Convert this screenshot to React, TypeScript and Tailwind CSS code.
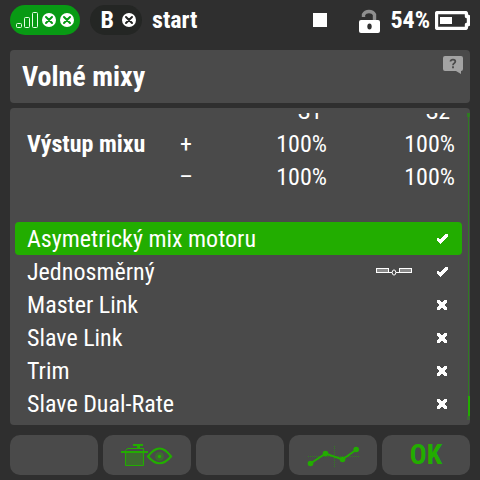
import { useState } from "react";

type MixOption = {
  name: string;
  enabled: boolean;
  surface?: boolean;
};

const mixOptions: MixOption[] = [
  { name: "Asymetrický mix motoru", enabled: true },
  { name: "Jednosměrný", enabled: true, surface: true },
  { name: "Master Link", enabled: false },
  { name: "Slave Link", enabled: false },
  { name: "Trim", enabled: false },
  { name: "Slave Dual-Rate", enabled: false },
];

const SignalIcon = () => (
  <svg width="22" height="16" viewBox="0 0 22 16" fill="none" stroke="#e8ffe8">
    <rect x="0.5" y="11.5" width="5" height="4" rx="1" />
    <rect x="8.5" y="5.5" width="5" height="10" rx="1" />
    <rect x="16.5" y="0.5" width="5" height="15" rx="1" />
  </svg>
);

const CrossCircle = ({ color }: { color: string }) => (
  <svg width="14" height="14" viewBox="0 0 14 14">
    <circle cx="7" cy="7" r="7" fill="#fff" />
    <path d="M4 4l6 6M10 4l-6 6" stroke={color} strokeWidth="2" strokeLinecap="round" />
  </svg>
);

const LockIcon = () => (
  <svg width="21" height="25" viewBox="0 0 21 25">
    <path d="M4.500 9V6.500a6 5 0 0 1 11 0V12" fill="none" stroke="#8f8f8f" strokeWidth="3.400" />
    <rect y="12" width="21" height="13" rx="2" fill="#fff" />
    <ellipse cx="10.500" cy="18.500" rx="2.200" ry="3" fill="#2f2f2f" />
  </svg>
);

const BatteryIcon = () => (
  <svg width="35" height="19" viewBox="0 0 35 19">
    <path
      d="M3 1.500h27q1.500 0 1.500 1.500v2.500h2v8h-2V16q0 1.500-1.500 1.500H3Q1.500 17.500 1.500 16V3Q1.500 1.500 3 1.500z"
      fill="#2f2f2f"
      stroke="#fff"
      strokeWidth="3.400"
      strokeLinejoin="round"
    />
    <rect x="5" y="6" width="12" height="7" fill="#fff" />
  </svg>
);

const HelpIcon = () => (
  <svg width="20" height="18" viewBox="0 0 20 18">
    <path d="M2 0h16q2 0 2 2v11q0 2-2 2v3l-5-3H2q-2 0-2-2V2Q0 0 2 0z" fill="#a3a3a3" />
    <path
      d="M7.500 5.500Q7.700 3.700 10 3.700q2.300 0 2.300 1.900 0 1-1.100 1.700-1.200.7-1.200 1.900M10 10.300v1.900"
      fill="none"
      stroke="#4a4a4a"
      strokeWidth="1.800"
    />
  </svg>
);

const CheckMark = () => (
  <svg width="11" height="10" viewBox="0 0 11 10" shapeRendering="crispEdges">
    <path d="M0 4h2v1h2V4h1V3h1V2h1V1h1V0h3v3h-1v1H9v1H8v1H7v1H6v1H5v1H4v1H3V9H2V8H1V7H0z" fill="#fff" />
  </svg>
);

const CrossMark = () => (
  <svg width="11" height="10" viewBox="0 0 11 10" shapeRendering="crispEdges">
    <path d="M0 0h3v1h1v1h2V1h1V0h3v3H9v1H8v2h1v1h1v3H7V9H6V8H4v1H3v1H0V7h1V6h1V4H1V3H0z" fill="#fff" />
  </svg>
);

const SurfaceIcon = () => (
  <svg width="36" height="8" viewBox="0 0 36 8">
    <rect x="0.500" y="0.500" width="12" height="4" fill="#8a8a8a" stroke="#fff" />
    <rect x="23.500" y="0.500" width="12" height="4" fill="#8a8a8a" stroke="#fff" />
    <path d="M12 4.500h4M20 4.500h4" stroke="#fff" />
    <ellipse cx="18" cy="4.500" rx="1.800" ry="2.600" fill="#4a4a4a" stroke="#fff" />
  </svg>
);

const ServoEyeIcon = () => (
  <svg width="52" height="22" viewBox="0 0 52 22" fill="#22ad00">
    <rect x="12" y="0" width="10" height="2" />
    <rect x="16" y="2" width="3" height="2" />
    <path d="M4.500 21.500v-15l2-2h16v17z" fill="#3d6b30" stroke="#22ad00" />
    <path d="M5 7V6.500L7 5h15v2z" fill="#4a4a4a" />
    <rect x="0" y="7" width="27" height="2" />
    <path d="M27 12.500Q38.500-3.500 50 12.500 38.500 26 27 12.500z" fill="#4a4a4a" stroke="#22ad00" strokeWidth="2.200" />
    <circle cx="38.500" cy="12.500" r="4.500" fill="#3d6b30" />
    <circle cx="38.500" cy="12.500" r="1.800" />
  </svg>
);

const CurveIcon = () => (
  <svg width="52" height="24" viewBox="0 0 52 24" fill="#22ad00">
    <path d="M1 13.500h51M27.500 3v21" stroke="#2c8c18" strokeDasharray="1 1" opacity="0.800" />
    <path d="M3.500 20.500l15-10 17 6 14-10" fill="none" stroke="#22ad00" strokeWidth="2" />
    <circle cx="3.500" cy="20.500" r="2.800" />
    <circle cx="18.500" cy="10.500" r="2.800" />
    <circle cx="35.500" cy="16.500" r="2.800" />
    <circle cx="49.200" cy="6.500" r="2.800" />
  </svg>
);

const StatusBar = () => (
  <header className="flex h-10 shrink-0 items-center text-2xl font-bold">
    <div className="flex h-[30px] w-[70px] items-center justify-center gap-1 rounded-full bg-[#089a14]">
      <SignalIcon />
      <CrossCircle color="#089a14" />
      <CrossCircle color="#089a14" />
    </div>
    <div className="ml-[10px] flex h-[30px] w-[52px] items-center justify-end gap-2 rounded-full bg-[#242624] pr-[6px]">
      <span>B</span>
      <CrossCircle color="#242624" />
    </div>
    <span className="ml-[10px]">start</span>
    <div className="ml-auto size-[14px] bg-white" />
    <div className="ml-8 flex items-center">
      <LockIcon />
    </div>
    <span className="ml-[10px]">54%</span>
    <div className="ml-[5px]">
      <BatteryIcon />
    </div>
  </header>
);

const OutputTable = () => (
  <table className="mb-7 w-full shrink-0 table-fixed border-collapse">
    <thead>
      <tr className="h-[33px] align-top">
        <td className="w-[153px] p-0" />
        <td className="w-9 p-0" />
        <th className="p-0 pr-3 text-right font-normal">S1</th>
        <th className="w-32 p-0 pr-3 text-right font-normal">S2</th>
      </tr>
    </thead>
    <tbody>
      <tr className="h-[33px] align-top">
        <th className="p-0 pl-3 text-left font-bold whitespace-nowrap">Výstup mixu</th>
        <td className="p-0 text-center">+</td>
        <td className="p-0 pr-[7px] text-right">100%</td>
        <td className="p-0 pr-[7px] text-right">100%</td>
      </tr>
      <tr className="h-[33px] align-top">
        <td className="p-0" />
        <td className="p-0 text-center">–</td>
        <td className="p-0 pr-[7px] text-right">100%</td>
        <td className="p-0 pr-[7px] text-right">100%</td>
      </tr>
    </tbody>
  </table>
);

const ScrollBar = () => (
  <div className="flex w-[3px] flex-col items-center">
    <div className="h-1 w-full bg-[#2f7a22]" />
    <div className="w-px flex-1 bg-[#2f7a22]" />
    <div className="h-5 w-[2px] self-end bg-[#22ad00]" />
    <div className="h-1 w-full bg-[#3b6a33]" />
  </div>
);

const App = () => {
  const [options, setOptions] = useState(mixOptions);
  const [selected, setSelected] = useState(0);

  const toggle = (index: number) => {
    setSelected(index);
    setOptions(options.map((o, i) => (i === index ? { ...o, enabled: !o.enabled } : o)));
  };

  return (
    <div className="flex h-screen flex-col bg-[#2f2f2f] px-[10px] pb-[5px] font-['Roboto_Condensed',Roboto,sans-serif] text-2xl text-white">
      <StatusBar />

      {/* Page title */}
      <div className="mt-[10px] flex h-[53px] shrink-0 items-center justify-between rounded-[4px] bg-[#4a4a4a] pr-[7px] pl-3">
        <h1 className="text-[28px] font-bold">Volné mixy</h1>
        <button type="button" aria-label="Help" className="mt-[6px] self-start">
          <HelpIcon />
        </button>
      </div>

      {/* Mix settings, scrolled to the end */}
      <main className="mt-[5px] flex min-h-0 flex-1 gap-[5px] rounded-[4px] bg-[#4a4a4a] py-[5px] pl-[5px]">
        <div className="flex min-w-0 flex-1 flex-col justify-end overflow-hidden">
          <OutputTable />
          {options.map((option, index) => (
            <label
              key={option.name}
              className={`flex h-[33px] shrink-0 items-center rounded-[4px] pr-[14px] pl-3 ${
                index === selected ? "bg-[#22ad00]" : ""
              }`}
            >
              <input
                type="checkbox"
                className="sr-only"
                checked={option.enabled}
                onChange={() => toggle(index)}
              />
              <span className="flex-1">{option.name}</span>
              {option.surface && (
                <span className="mr-[25px]">
                  <SurfaceIcon />
                </span>
              )}
              {option.enabled ? <CheckMark /> : <CrossMark />}
            </label>
          ))}
        </div>
        <ScrollBar />
      </main>

      {/* Function keys */}
      <footer className="mt-[10px] grid h-10 shrink-0 grid-cols-5 gap-[5px] text-[28px] font-bold text-[#22ad00]">
        <button type="button" aria-label="F1" className="rounded-[10px] bg-[#4a4a4a]" />
        <button type="button" aria-label="Servo view" className="flex items-center justify-center rounded-[10px] bg-[#4a4a4a]">
          <ServoEyeIcon />
        </button>
        <button type="button" aria-label="F3" className="rounded-[10px] bg-[#4a4a4a]" />
        <button type="button" aria-label="Curve" className="flex items-center justify-center rounded-[10px] bg-[#4a4a4a]">
          <CurveIcon />
        </button>
        <button type="button" className="rounded-[10px] bg-[#4a4a4a] leading-10">
          OK
        </button>
      </footer>
    </div>
  );
};

export default App;
